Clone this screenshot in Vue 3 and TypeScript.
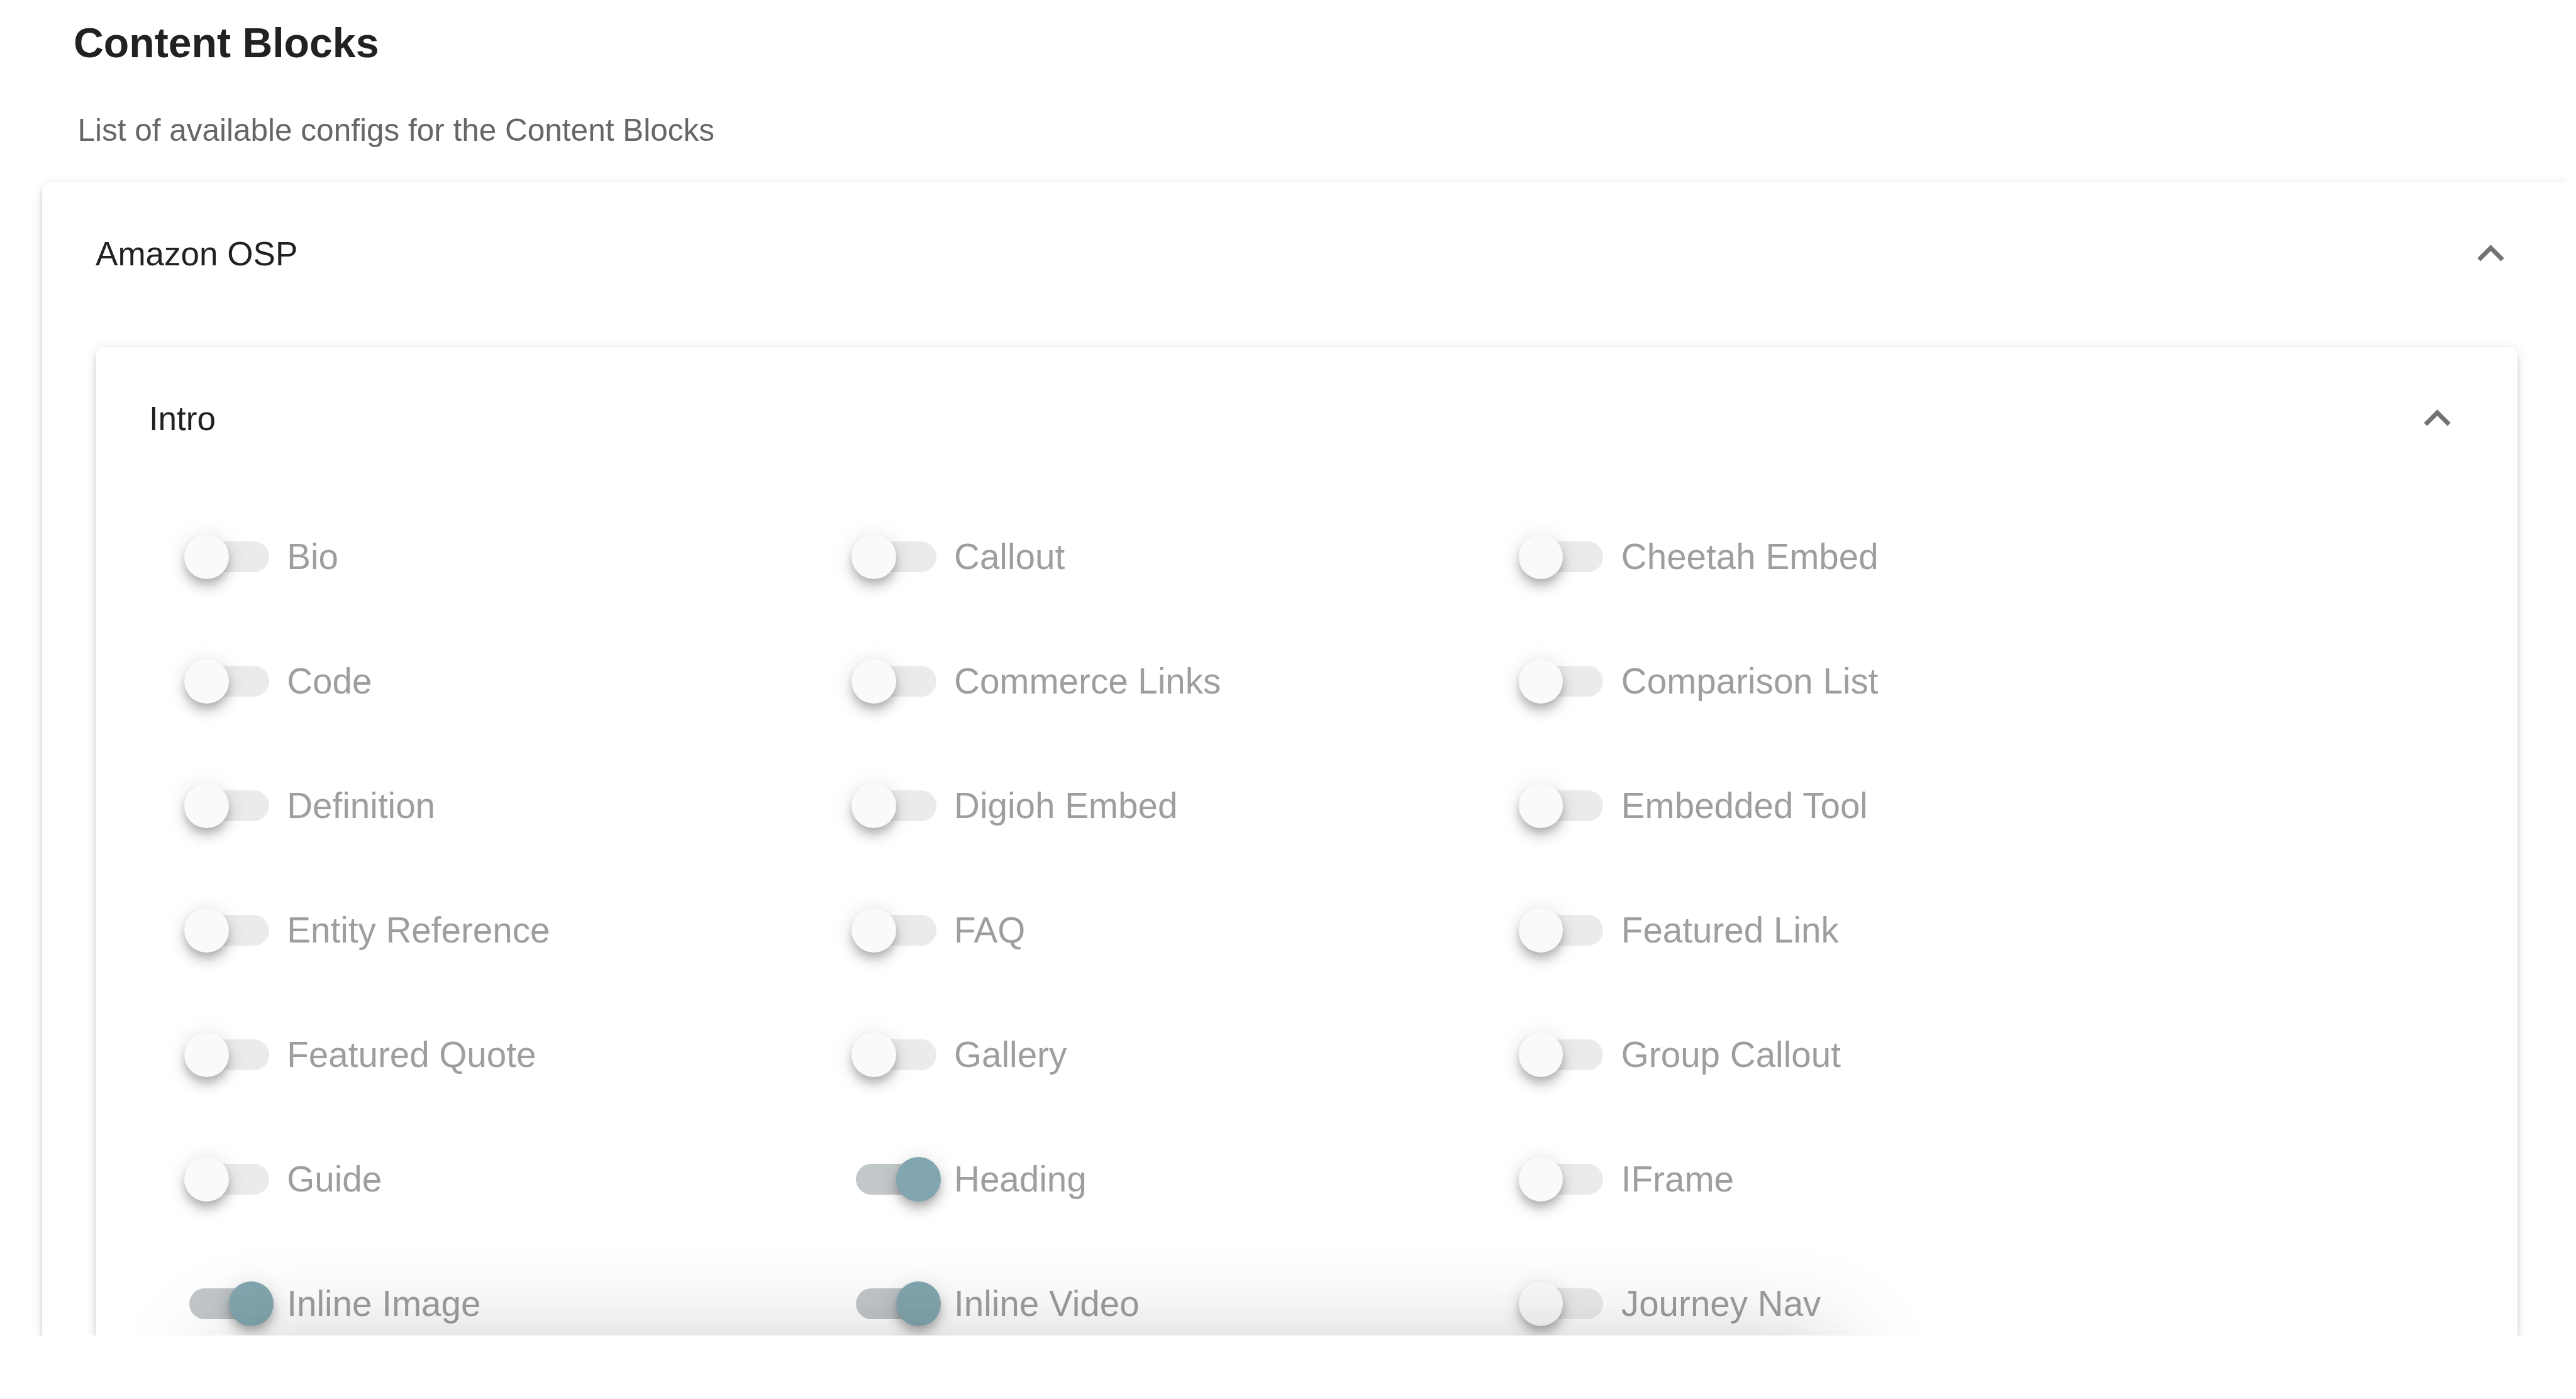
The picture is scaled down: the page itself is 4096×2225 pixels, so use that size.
<script setup lang="ts">
interface Block {
  name: string
  enabled: boolean
}

const enabledBlocks = new Set(['Heading', 'Inline Image', 'Inline Video'])

const blocks: Block[] = [
  'Bio', 'Callout', 'Cheetah Embed',
  'Code', 'Commerce Links', 'Comparison List',
  'Definition', 'Digioh Embed', 'Embedded Tool',
  'Entity Reference', 'FAQ', 'Featured Link',
  'Featured Quote', 'Gallery', 'Group Callout',
  'Guide', 'Heading', 'IFrame',
  'Inline Image', 'Inline Video', 'Journey Nav',
].map((name) => ({ name, enabled: enabledBlocks.has(name) }))
</script>

<template>
  <main class="page">
    <h3 class="title">Content Blocks</h3>
    <p class="hint">List of available configs for the Content Blocks</p>

    <section class="panel outer">
      <header class="panel-header">
        <span>Amazon OSP</span>
        <svg class="chevron" viewBox="0 0 24 24"><path d="M7.41 15.41 12 10.83l4.59 4.58L18 14l-6-6-6 6z" /></svg>
      </header>

      <section class="panel inner">
        <header class="panel-header">
          <span>Intro</span>
          <svg class="chevron" viewBox="0 0 24 24"><path d="M7.41 15.41 12 10.83l4.59 4.58L18 14l-6-6-6 6z" /></svg>
        </header>
        <div class="blocks">
          <label v-for="block in blocks" :key="block.name" class="block">
            <span class="switch" :class="{ on: block.enabled }">
              <span class="thumb"></span>
            </span>
            <span>{{ block.name }}</span>
          </label>
        </div>
      </section>
    </section>

    <div class="sheet"></div>
  </main>
</template>

<style>
html {
  font-size: 3.536px;
  background: #fff;
}
</style>

<style scoped>
.page {
  position: relative;
  box-sizing: border-box;
  width: 4081px;
  height: 2124px;
  padding-top: 5.3rem;
  overflow: hidden;
  background: #fff;
  color: #212121;
  font-family: "Liberation Sans", Arial, Helvetica, sans-serif;
}

.title {
  margin: 0 0 0 33.1rem;
  font-size: 18.72rem;
  line-height: 28rem;
  font-weight: 700;
}

.hint {
  margin: 15.35rem 0 13.5rem 34.9rem;
  font-size: 14rem;
  line-height: 20rem;
  color: #666;
}

.panel {
  border-radius: 4rem;
  background: #fff;
  box-shadow:
    0 3rem 1rem -2rem rgba(0, 0, 0, 0.2),
    0 2rem 2rem 0 rgba(0, 0, 0, 0.14),
    0 1rem 5rem 0 rgba(0, 0, 0, 0.12);
}

.outer {
  box-sizing: border-box;
  width: 1137.1rem;
  height: 700rem;
  margin-left: 19rem;
}

.inner {
  height: 600rem;
  margin: 10rem 24rem 0 24rem;
}

.panel-header {
  display: flex;
  align-items: center;
  justify-content: space-between;
  height: 64rem;
  padding: 0 24rem;
  font-size: 15rem;
}

.chevron {
  width: 24rem;
  height: 24rem;
  fill: #737373;
}

.blocks {
  display: grid;
  grid-template-columns: repeat(3, 300rem);
  grid-auto-rows: 56rem;
  padding: 2.25rem 0 0 39.9rem;
}

.block {
  display: flex;
  align-items: center;
  gap: 10.15rem;
  font-size: 16rem;
  color: #9e9e9e;
}

.switch {
  display: flex;
  align-items: center;
  width: 36rem;
  height: 14rem;
  margin-left: 2.1rem;
  margin-right: -2.1rem;
  border-radius: 7rem;
  background: #ebebeb;
}

.switch.on {
  background: #c2c7c9;
}

.thumb {
  flex: none;
  width: 20rem;
  height: 20rem;
  margin-left: -2.1rem;
  border-radius: 50%;
  background: #fafafa;
  box-shadow:
    0 2rem 4rem -1rem rgba(0, 0, 0, 0.2),
    0 4rem 5rem 0 rgba(0, 0, 0, 0.14),
    0 1rem 10rem 0 rgba(0, 0, 0, 0.12);
}

.on .thumb {
  margin-left: 18rem;
  background: #82a6af;
}

/* Sheet waiting just under the fold; only its shadow reaches the page. */
.sheet {
  position: absolute;
  left: 104rem;
  top: 603rem;
  width: 716rem;
  height: 300rem;
  border-radius: 4rem;
  box-shadow:
    0 11rem 15rem -7rem rgba(0, 0, 0, 0.2),
    0 24rem 38rem 3rem rgba(0, 0, 0, 0.14),
    0 9rem 46rem 8rem rgba(0, 0, 0, 0.19);
}
</style>
